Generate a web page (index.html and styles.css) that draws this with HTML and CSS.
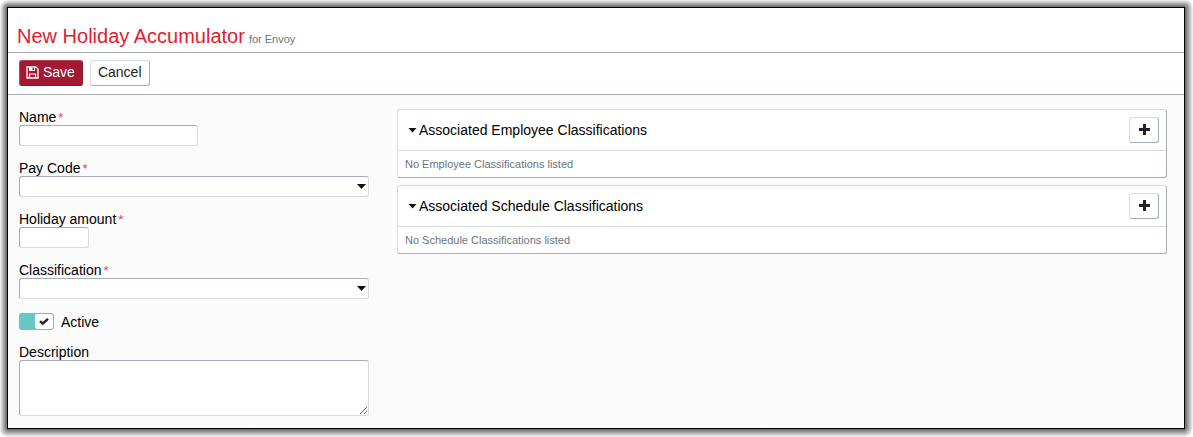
FILE: index.html
```html
<!DOCTYPE html>
<html lang="en">
<head>
    <meta charset="UTF-8">
    <meta name="viewport" content="width=device-width, initial-scale=1.0">
    <title>New Holiday Accumulator</title>
    <link rel="stylesheet" href="styles.css">
</head>
<body>
    <div class="frame">
    <form class="window">
        <header class="page-header">
            <h1>New Holiday Accumulator</h1>
            <small>for Envoy</small>
        </header>

        <!-- Toolbar -->
        <div class="toolbar">
            <button type="submit" class="btn btn-primary">
                <svg class="icon-save" viewBox="0 0 13 13" aria-hidden="true">
                    <path fill="none" stroke="currentColor" stroke-width="1.3" d="M1 1h9l2 2v9H1z"/>
                    <path fill="currentColor" d="M3 1h6v4H3z"/>
                    <path fill="#a51834" d="M6.5 1.5h1.5v2.5H6.5z"/>
                    <path fill="none" stroke="currentColor" stroke-width="1.2" d="M3.5 12V8h6v4"/>
                </svg>
                Save
            </button>
            <button type="button" class="btn">Cancel</button>
        </div>

        <div class="content">
            <!-- Accumulator fields -->
            <div class="fields">
                <div class="field">
                    <label for="name">Name<span class="required">*</span></label>
                    <input type="text" id="name" class="medium" required>
                </div>
                <div class="field">
                    <label for="payCode">Pay Code<span class="required">*</span></label>
                    <div class="select">
                        <select id="payCode" required>
                            <option value=""></option>
                        </select>
                    </div>
                </div>
                <div class="field">
                    <label for="amount">Holiday amount<span class="required">*</span></label>
                    <input type="text" id="amount" class="short" required>
                </div>
                <div class="field">
                    <label for="classification">Classification<span class="required">*</span></label>
                    <div class="select">
                        <select id="classification" required>
                            <option value=""></option>
                        </select>
                    </div>
                </div>
                <label class="toggle">
                    <input type="checkbox" checked>
                    <span class="switch">
                        <span class="knob">
                            <svg viewBox="0 0 10 8" aria-hidden="true"><path fill="none" stroke="#222" stroke-width="2.4" d="M1 3.2l2.7 2.5L9 .9"/></svg>
                        </span>
                    </span>
                    Active
                </label>
                <div class="field">
                    <label for="description">Description</label>
                    <textarea id="description"></textarea>
                </div>
            </div>

            <!-- Associated classifications -->
            <div class="panels">
                <section class="panel">
                    <div class="panel-header">
                        <h2><span class="caret"></span>Associated Employee Classifications</h2>
                        <button type="button" class="btn btn-add" aria-label="Add employee classification">
                            <svg viewBox="0 0 11 11" aria-hidden="true"><path fill="#222" d="M4 0h3v4h4v3H7v4H4V7H0V4h4z"/></svg>
                        </button>
                    </div>
                    <p>No Employee Classifications listed</p>
                </section>
                <section class="panel">
                    <div class="panel-header">
                        <h2><span class="caret"></span>Associated Schedule Classifications</h2>
                        <button type="button" class="btn btn-add" aria-label="Add schedule classification">
                            <svg viewBox="0 0 11 11" aria-hidden="true"><path fill="#222" d="M4 0h3v4h4v3H7v4H4V7H0V4h4z"/></svg>
                        </button>
                    </div>
                    <p>No Schedule Classifications listed</p>
                </section>
            </div>
        </div>
    </form>
    </div>
</body>
</html>
```
FILE: styles.css
```css
* {
    box-sizing: border-box;
}
body {
    margin: 0;
    font-family: "Liberation Sans", Arial, sans-serif;
    font-size: 14px;
    line-height: 16px;
    color: #000;
    background: #fff;
}
/* Soft shadow around the window: four corners, then four edges */
.frame {
    padding: 7px 8px 8px 7px;
    background:
        radial-gradient(circle at bottom right, #777, #fff 7px) left top / 7px 7px no-repeat,
        radial-gradient(circle at bottom left, #777, #fff 8px) right top / 8px 7px no-repeat,
        radial-gradient(circle at top right, #777, #fff 8px) left bottom / 7px 8px no-repeat,
        radial-gradient(circle at top left, #777, #fff 8px) right bottom / 8px 8px no-repeat,
        linear-gradient(to left, #666, #f4f4f4) left / 7px 100% no-repeat,
        linear-gradient(to right, #666, #f8f8f8) right / 8px 100% no-repeat,
        linear-gradient(to top, #666, #f4f4f4) top / 100% 7px no-repeat,
        linear-gradient(to bottom, #666, #f8f8f8) bottom / 100% 8px no-repeat;
}
.window {
    border: 1px solid #000;
    background: #fbfbfb;
}

/* Header */
.page-header {
    display: flex;
    align-items: baseline;
    gap: 4px;
    padding: 16px 9px 4px;
    background: #fff;
    border-bottom: 1px solid #a5acb3;
}
h1 {
    margin: 0;
    font-size: 20px;
    line-height: 24px;
    font-weight: normal;
    color: #e31b2e;
}
small {
    font-size: 11px;
    color: #6c757e;
}

/* Buttons */
.toolbar {
    display: flex;
    gap: 7px;
    padding: 7px 10px 8px 11px;
    background: #fff;
    border-bottom: 1px solid #a5acb3;
}
.btn {
    display: flex;
    align-items: center;
    gap: 4px;
    height: 26px;
    padding: 0 7px 2px;
    font: inherit;
    color: #222;
    background: #fff;
    border: 1px solid;
    border-color: #d9dbdd #a5acb3 #a5acb3 #d9dbdd;
    border-radius: 3px;
}
.btn-primary {
    padding: 0 7px 2px 6px;
    color: #fff;
    background: #a51834;
    border-color: #b9465c #8d1a30 #8d1a30 #b9465c;
}
.icon-save {
    width: 13px;
    height: 13px;
}

/* Form fields */
.content {
    display: flex;
    gap: 28px;
    padding: 14px 17px 12px 11px;
}
.fields {
    display: flex;
    flex-direction: column;
    flex: 0 0 350px;
    gap: 14px;
}
.field label {
    display: block;
}
.required {
    margin-left: 2px;
    font-size: 13px;
    line-height: 1;
    color: #e8404f;
}
input[type="text"],
select,
textarea {
    display: block;
    width: 100%;
    height: 21px;
    padding: 0 4px;
    font: inherit;
    background: #fff;
    border: 1px solid;
    border-color: #a5acb3 #d9dbdd #d9dbdd #a5acb3;
    border-radius: 3px;
}
input.medium {
    width: 179px;
}
input.short {
    width: 70px;
}
textarea {
    height: 56px;
}
select {
    appearance: none;
}
.select {
    position: relative;
}
.select::after,
.caret {
    width: 9px;
    height: 5px;
    background: #111;
    clip-path: polygon(0 0, 100% 0, 50% 100%);
}
.select::after {
    content: "";
    position: absolute;
    top: 8px;
    right: 3px;
    pointer-events: none;
}

/* Toggle */
.toggle {
    display: flex;
    align-items: center;
    gap: 7px;
    height: 17px;
}
.toggle input {
    position: absolute;
    opacity: 0;
}
.switch {
    display: flex;
    justify-content: flex-end;
    width: 35px;
    height: 17px;
    background: #68c6c5;
    border: 1px solid #68c6c5;
    border-right-color: #a5acb3;
    border-radius: 3px;
}
.knob {
    display: flex;
    align-items: center;
    justify-content: center;
    width: 18px;
    background: #fff;
    border-radius: 2px;
}
.knob svg {
    width: 10px;
    height: 8px;
}

/* Panels */
.panels {
    display: flex;
    flex-direction: column;
    flex: 1;
    gap: 7px;
}
.panel {
    background: #fff;
    border: 1px solid;
    border-color: #d9dbdd #a5acb3 #a5acb3 #d9dbdd;
    border-radius: 3px;
}
.panel-header {
    display: flex;
    align-items: center;
    justify-content: space-between;
    padding: 7px 7px 7px 10px;
    border-bottom: 1px solid #d9dbdd;
}
h2 {
    display: flex;
    align-items: center;
    gap: 2px;
    margin: 0;
    font-size: 14px;
    font-weight: normal;
}
.btn-add {
    justify-content: center;
    width: 30px;
    padding: 0 0 2px;
}
.btn-add svg {
    width: 11px;
    height: 11px;
}
.panel p {
    margin: 0;
    padding: 5px 7px;
    font-size: 11px;
    color: #6c757e;
}
```
